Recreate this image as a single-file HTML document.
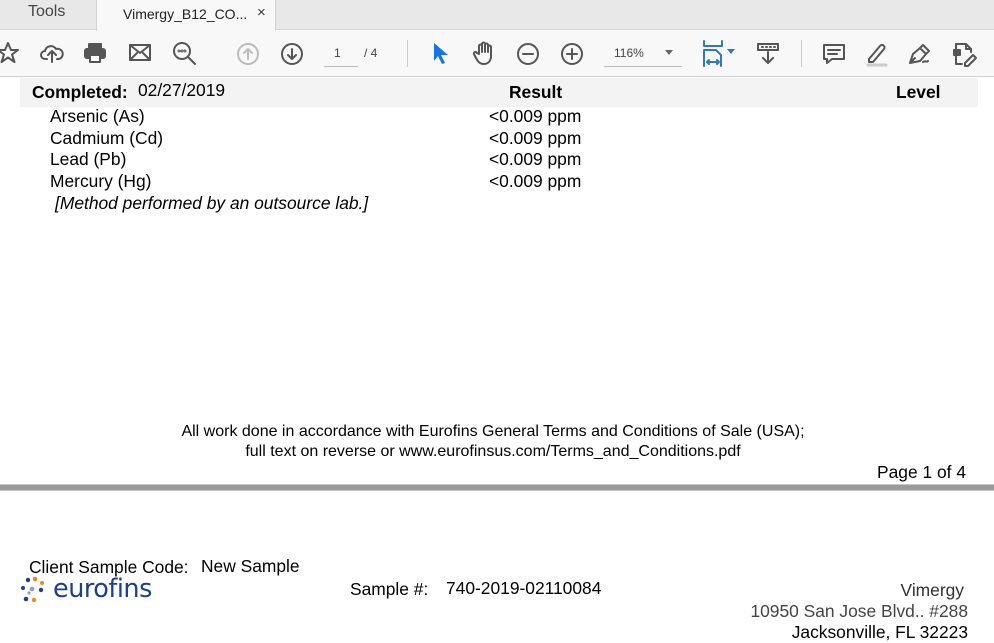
<!DOCTYPE html>
<html><head><meta charset="utf-8"><style>
*{margin:0;padding:0;box-sizing:border-box}
body{width:994px;height:641px;overflow:hidden;background:#fff;font-family:"Liberation Sans",Arial,sans-serif;position:relative;color:#000}
.a{position:absolute;white-space:nowrap}
svg.i{position:absolute;fill:none;stroke:#555;stroke-width:2;stroke-linecap:round;stroke-linejoin:round}
.t{font-size:17.4px}
</style></head><body>
<div class="a" style="left:0;top:0;width:994px;height:30px;background:#e8e8e8;border-bottom:1px solid #d4d4d4"></div>
<div class="a" style="left:28px;top:3px;font-size:16px;color:#444">Tools</div>
<div class="a" style="left:96px;top:0;width:180px;height:31px;background:#f8f8f8;border-left:1px solid #d4d4d4;border-right:1px solid #d4d4d4"></div>
<div class="a" style="left:123px;top:6px;font-size:14px;color:#222">Vimergy_B12_CO...</div>
<div class="a" style="left:257px;top:4px;font-size:15px;color:#333">×</div>
<div class="a" style="left:0;top:31px;width:994px;height:46px;background:#f8f8f8;border-bottom:1px solid #cfcfcf"></div>
<svg class="i" style="left:-4px;top:41px" width="24" height="24" viewBox="0 0 24 24"><path d="M12 2l3 7h7l-6 4.5 2.5 7.5-6.5-4.5-6.5 4.5 2.5-7.5-6-4.5h7z"/></svg>
<svg class="i" style="left:40px;top:41px" width="24" height="24" viewBox="0 0 24 24"><path d="M7 18H5a4 4 0 0 1 0-8 6 6 0 0 1 11-2 5 5 0 0 1 3 10h-2M12 21V11M8 14l4-4 4 4"/></svg>
<svg class="i" style="left:83px;top:41px" width="24" height="24" viewBox="0 0 24 24"><rect x="6" y="3" width="12" height="5" fill="#555"/><rect x="2" y="8" width="20" height="9" rx="2" fill="#555"/><rect x="7" y="14" width="10" height="7" fill="#fff"/></svg>
<svg class="i" style="left:128px;top:42px" width="24" height="22" viewBox="0 0 24 22"><rect x="2" y="3" width="20" height="15"/><path d="M2 3l10 8 10-8M2 18l7-7M22 18l-7-7"/></svg>
<svg class="i" style="left:172px;top:41px" width="26" height="26" viewBox="0 0 26 26"><circle cx="10" cy="10" r="8"/><path d="M16 16l7 7"/><circle cx="7" cy="10" r=".5"/><circle cx="10" cy="10" r=".5"/><circle cx="13" cy="10" r=".5"/></svg>
<svg class="i" style="left:236px;top:42px;stroke:#bbb" width="24" height="24" viewBox="0 0 24 24"><circle cx="12" cy="12" r="10"/><path d="M12 17V7M8 11l4-4 4 4"/></svg>
<svg class="i" style="left:280px;top:42px" width="24" height="24" viewBox="0 0 24 24"><circle cx="12" cy="12" r="10"/><path d="M12 7v10M8 13l4 4 4-4"/></svg>
<div class="a" style="left:324px;top:66px;width:34px;border-top:1px solid #bbb"></div>
<div class="a" style="left:334px;top:46px;font-size:12px;color:#444">1</div>
<div class="a" style="left:364px;top:46px;font-size:12px;color:#444">/ 4</div>
<div class="a" style="left:407px;top:40px;height:27px;border-left:1px solid #ccc"></div>
<svg class="i" style="left:432px;top:42px;stroke:none;fill:#1473e6" width="18" height="22" viewBox="0 0 18 22"><path d="M2 1l14 12h-7l4 8-3 1-4-8-4 5z"/></svg>
<svg class="i" style="left:472px;top:40px" width="26" height="26" viewBox="0 0 26 26"><path d="M7 14V6a1.5 1.5 0 0 1 3 0v6V4a1.5 1.5 0 0 1 3 0v8V5a1.5 1.5 0 0 1 3 0v7V7a1.5 1.5 0 0 1 3 0v9c0 5-3 8-7 8s-6-2-8-6l-2-4a1.5 1.5 0 0 1 3-1z"/></svg>
<svg class="i" style="left:516px;top:42px" width="24" height="24" viewBox="0 0 24 24"><circle cx="12" cy="12" r="10"/><path d="M7 12h10"/></svg>
<svg class="i" style="left:560px;top:42px" width="24" height="24" viewBox="0 0 24 24"><circle cx="12" cy="12" r="10"/><path d="M7 12h10M12 7v10"/></svg>
<div class="a" style="left:604px;top:66px;width:78px;border-top:1px solid #bbb"></div>
<div class="a" style="left:614px;top:46px;font-size:12px;color:#444">116%</div>
<div class="a" style="left:665px;top:50px;border:4px solid transparent;border-top:5px solid #666"></div>
<svg class="i" style="left:702px;top:40px;stroke:#2d7ac0" width="24" height="28" viewBox="0 0 24 28"><path d="M2 1v5h18V1M2 26V10h12l5 5v11M5 22h12M5 22l2-2M5 22l2 2M17 22l-2-2M17 22l-2 2"/></svg>
<div class="a" style="left:727px;top:49px;border:4px solid transparent;border-top:5px solid #2d7ac0"></div>
<svg class="i" style="left:756px;top:42px" width="24" height="24" viewBox="0 0 24 24"><rect x="2" y="2" width="20" height="6"/><path d="M6 5h1M10 5h1M14 5h1M18 5h1M12 10v11M7 16l5 5 5-5"/></svg>
<div class="a" style="left:801px;top:40px;height:27px;border-left:1px solid #ccc"></div>
<svg class="i" style="left:822px;top:42px" width="24" height="24" viewBox="0 0 24 24"><path d="M2 3h20v14H10l-5 4v-4H2z M6 8h12M6 12h9"/></svg>
<svg class="i" style="left:864px;top:41px" width="26" height="26" viewBox="0 0 26 26"><path d="M5 18l11-13a2.5 2.5 0 0 1 4 3L9 21H5z"/><path d="M4 24h18" stroke="#ccc" stroke-width="3"/></svg>
<svg class="i" style="left:907px;top:41px" width="26" height="26" viewBox="0 0 26 26"><path d="M3 22l3-9 7-6 6 6-6 7zM3 22l5-5M13 7l3-3 6 6-3 3M16 21c2-2 3 1 5-1"/></svg>
<svg class="i" style="left:952px;top:41px" width="26" height="26" viewBox="0 0 26 26"><path d="M4 10V3h10l5 5v3M4 15v8h6M14 3v5h5M13 22l8-8 3 3-8 8h-3z"/><rect x="2" y="9" width="6" height="5" fill="#555"/></svg>
<div class="a" style="left:20px;top:78px;width:958px;height:29px;background:#f3f3f3"></div>
<div class="a t" style="left:32px;top:82px;font-weight:bold">Completed:</div>
<div class="a t" style="left:138px;top:80px">02/27/2019</div>
<div class="a t" style="left:509px;top:82px;font-weight:bold">Result</div>
<div class="a t" style="left:896px;top:82px;font-weight:bold">Level</div>
<div class="a t" style="left:50px;top:106px;line-height:21.7px">Arsenic (As)<br>Cadmium (Cd)<br>Lead (Pb)<br>Mercury (Hg)</div>
<div class="a t" style="left:489px;top:106px;line-height:21.7px">&lt;0.009 ppm<br>&lt;0.009 ppm<br>&lt;0.009 ppm<br>&lt;0.009 ppm</div>
<div class="a t" style="left:55px;top:193px;font-style:italic">[Method performed by an outsource lab.]</div>
<div class="a" style="left:0;top:422px;width:986px;text-align:center;font-size:16px;line-height:20px">All work done in accordance with Eurofins General Terms and Conditions of Sale (USA);<br>full text on reverse or www.eurofinsus.com/Terms_and_Conditions.pdf</div>
<div class="a t" style="right:28px;top:462px">Page 1 of 4</div>
<div class="a" style="left:0;top:484px;width:994px;height:7px;background:#9b9b9b;border-top:1px solid #c8c8c8;border-bottom:1px solid #c8c8c8"></div>
<div class="a t" style="left:29px;top:557px">Client Sample Code:</div>
<div class="a t" style="left:201px;top:556px">New Sample</div>
<svg class="a" style="left:20px;top:576px" width="30" height="28" viewBox="0 0 30 28"><g fill="#1d3f8f"><circle cx="8" cy="4" r="2.2"/><circle cx="3" cy="12" r="2"/><circle cx="6" cy="23" r="2.3"/><circle cx="21" cy="14" r="2.2"/></g><g fill="#f08a24"><circle cx="15" cy="3" r="2.3"/><circle cx="22" cy="7" r="2"/><circle cx="14" cy="24" r="2.2"/></g><g fill="#8aa0c8"><circle cx="12" cy="13" r="2.3"/><circle cx="9" cy="17" r="1.6"/></g></svg>
<div class="a" style="left:53px;top:574px;font-size:25.5px;color:#1d3f8f;font-family:'DejaVu Sans',sans-serif;letter-spacing:-0.5px">eurofins</div>
<div class="a t" style="left:350px;top:579px">Sample #:</div>
<div class="a t" style="left:446px;top:578px">740-2019-02110084</div>
<div class="a t" style="right:30px;top:580px;color:#333">Vimergy</div>
<div class="a t" style="right:26px;top:601px;color:#444">10950 San Jose Blvd.. #288</div>
<div class="a t" style="right:26px;top:622px">Jacksonville, FL 32223</div>
</body></html>
